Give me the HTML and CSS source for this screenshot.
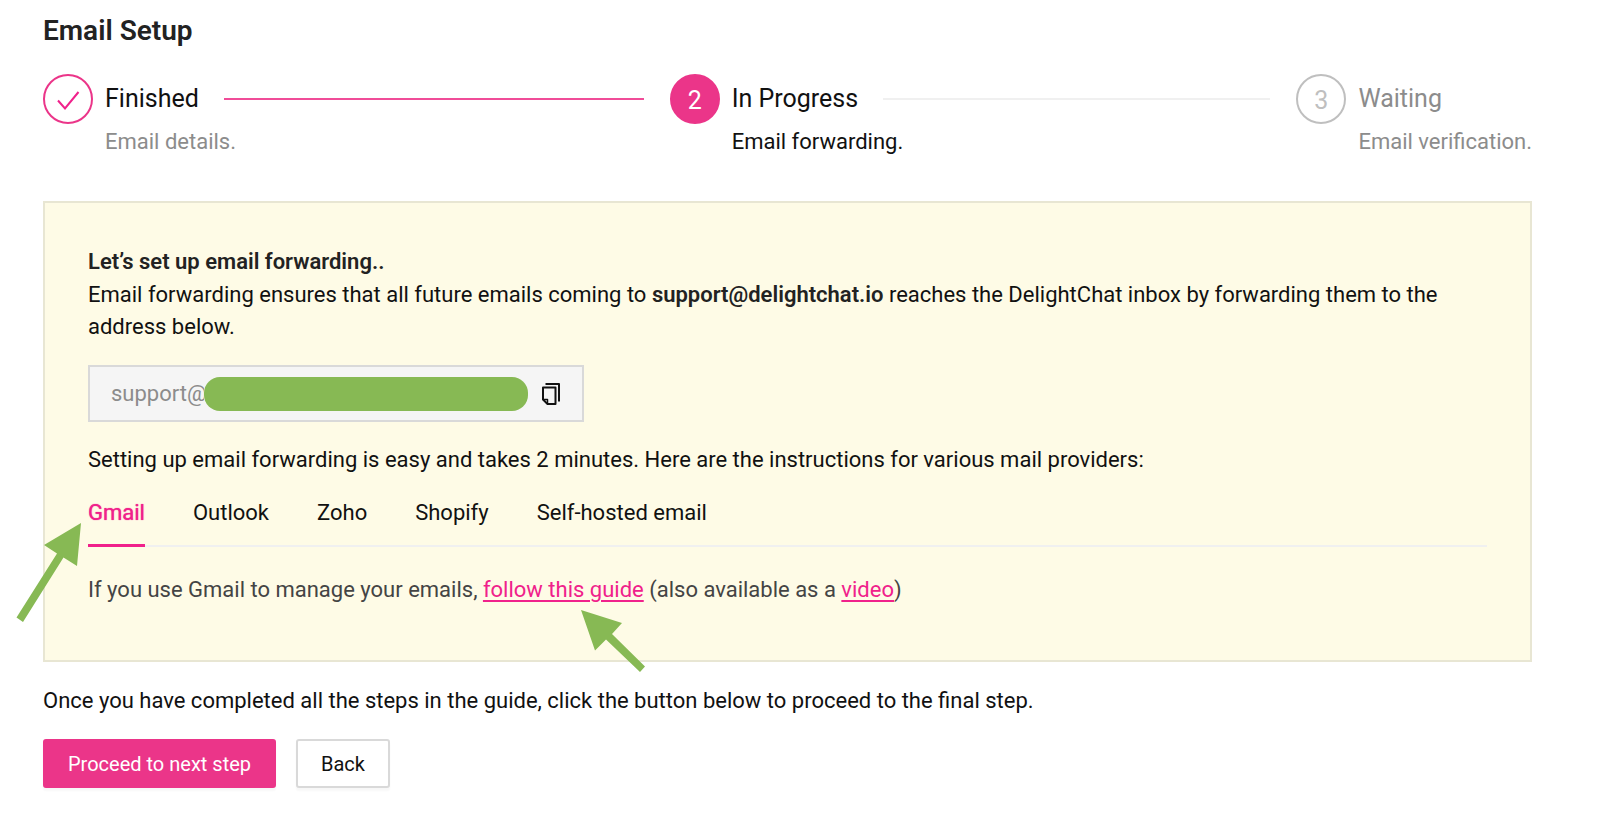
FILE: index.html
```html
<!DOCTYPE html>
<html lang="en">
<head>
<meta charset="utf-8">
<title>Email Setup</title>
<link rel="stylesheet" href="styles.css">
</head>
<body>
<main class="page">
  <h1 class="page-title">Email Setup</h1>

  <ol class="steps">
    <li class="step step-done">
      <span class="step-icon">
        <svg width="24" height="24" viewBox="0 0 24 24" fill="none" stroke="currentColor" stroke-width="2"><path d="M2 11.500 L9 19.500 L22.500 3"/></svg>
      </span>
      <div class="step-body">
        <div class="step-title">Finished</div>
        <div class="step-text">Email details.</div>
      </div>
    </li>
    <li class="step step-active">
      <span class="step-icon">2</span>
      <div class="step-body">
        <div class="step-title">In Progress</div>
        <div class="step-text">Email forwarding.</div>
      </div>
    </li>
    <li class="step step-wait">
      <span class="step-icon">3</span>
      <div class="step-body">
        <div class="step-title">Waiting</div>
        <div class="step-text">Email verification.</div>
      </div>
    </li>
  </ol>

  <section class="panel">
    <h2 class="panel-title">Let’s set up email forwarding..</h2>
    <p class="text">Email forwarding ensures that all future emails coming to <strong>support@delightchat.io</strong> reaches the DelightChat inbox by forwarding them to the address below.</p>

    <div class="address">
      <input class="address-input" type="text" value="support@" aria-label="Forwarding address" readonly>
      <span class="address-mask"></span>
      <button class="copy" type="button" aria-label="Copy address">
        <svg width="18" height="22" viewBox="0 0 18 22" fill="none" stroke="currentColor" stroke-width="2" stroke-linejoin="round"><path d="M3.500 1H17V18.500"/><path d="M1 4.500H13.500V21H5.500L1 16.500Z"/><path d="M1.500 16.500H5.500V20.500" stroke-width="1.500"/></svg>
      </button>
    </div>

    <p class="text">Setting up email forwarding is easy and takes 2 minutes. Here are the instructions for various mail providers:</p>

    <div class="tabs" role="tablist">
      <button class="tab tab-active" type="button" role="tab" aria-selected="true">Gmail
        <svg class="arrow arrow-tab" width="66" height="100" viewBox="0 0 66 100" fill="currentColor"><path d="M65 0 L61 43 L47.500 34.500 L7 99 L.5 94.500 L41 30.500 L28 22 Z"/></svg>
      </button>
      <button class="tab" type="button" role="tab" aria-selected="false">Outlook</button>
      <button class="tab" type="button" role="tab" aria-selected="false">Zoho</button>
      <button class="tab" type="button" role="tab" aria-selected="false">Shopify</button>
      <button class="tab" type="button" role="tab" aria-selected="false">Self-hosted email</button>
    </div>

    <p class="text guide">If you use Gmail to manage your emails, <a class="link" href="#guide">follow this guide<svg class="arrow arrow-link" width="64" height="62" viewBox="0 0 64 62" fill="currentColor"><path d="M0 0 L41 13 L31 24 L64 56.500 L59 62 L25 29.500 L14 40.500 Z"/></svg></a> (also available as a <a class="link" href="#video">video</a>)</p>
  </section>

  <p class="text after">Once you have completed all the steps in the guide, click the button below to proceed to the final step.</p>

  <div class="actions">
    <button class="btn btn-primary" type="button">Proceed to next step</button>
    <button class="btn" type="button">Back</button>
  </div>
</main>
</body>
</html>
```
FILE: styles.css
```css
:root {
  --pink: #eb3589;
  --pink-text: #f0218b;
  --green: #87b954;
}

* {
  box-sizing: border-box;
}

body {
  margin: 0;
  background: #fff;
  color: #111;
  font-family: Roboto, "Liberation Sans", sans-serif;
  font-size: 22px;
  line-height: 32px;
}

h1, h2, p, ol {
  margin: 0;
  padding: 0;
}

button, input {
  padding: 0;
  border: 0;
  background: none;
  color: inherit;
  font: inherit;
}

.page {
  padding: 11px 68px 32px 43px;
}

.page-title {
  color: #222;
  font-size: 28px;
  font-weight: 600;
  line-height: 40px;
}

.steps {
  display: flex;
  gap: 26px;
  margin-top: 23px;
  list-style: none;
}

.step {
  display: flex;
  flex: 1 1 0;
  gap: 12px;
}

.step:last-child {
  flex: none;
}

.step-icon {
  display: flex;
  flex: none;
  align-items: center;
  justify-content: center;
  width: 50px;
  height: 50px;
  padding-top: 4px;
  border: 2px solid var(--pink);
  border-radius: 50%;
  color: var(--pink-text);
  font-size: 25px;
}

.step-active .step-icon {
  background: var(--pink);
  color: #fff;
}

.step-wait .step-icon {
  border-color: #bfbfbf;
  color: #bfbfbf;
}

.step-body {
  flex: 1;
}

.step-title {
  display: flex;
  align-items: center;
  gap: 25px;
  font-size: 25px;
  line-height: 50px;
}

.step:not(:last-child) .step-title::after {
  content: "";
  flex: 1;
  height: 2px;
  background: #f0f0f0;
}

.step-done:not(:last-child) .step-title::after {
  background: #f04c98;
}

.step-text {
  padding-top: 2px;
}

.step-done .step-text,
.step-wait .step-body {
  color: #8c8c8c;
}

.panel {
  margin-top: 43px;
  padding: 43px;
  padding-bottom: 54px;
  border: 2px solid #e8e6d3;
  background: #fefbe6;
}

.panel-title,
.panel strong {
  color: #222;
  font-size: 22px;
  font-weight: 600;
}

.panel-title {
  padding-bottom: 1px;
}

.address {
  display: flex;
  align-items: center;
  width: 496px;
  max-width: 100%;
  height: 57px;
  margin: 22px 0;
  padding: 0 22px 0 21px;
  border: 2px solid #d9d9d9;
  background: #f5f5f5;
  color: #8c8c8c;
}

.address-input {
  width: 93px;
}

.address-mask {
  flex: 1;
  height: 34px;
  border-radius: 16px;
  background: var(--green);
}

.copy {
  display: flex;
  margin-left: 14px;
  color: #111;
}

.tabs {
  display: flex;
  gap: 48px;
  margin-top: 21px;
  box-shadow: inset 0 -2px #f0f0f0;
}

.tab {
  position: relative;
  padding-bottom: 15px;
  border-bottom: 3px solid transparent;
}

.tab-active {
  border-color: var(--pink-text);
  color: var(--pink-text);
  text-shadow: 0 0 1px var(--pink-text);
}

.guide {
  margin-top: 27px;
  color: #444;
}

.link {
  position: relative;
  color: var(--pink-text);
  text-decoration: underline;
  text-underline-offset: 3px;
  text-decoration-thickness: 2px;
}

.arrow {
  position: absolute;
  color: var(--green);
  pointer-events: none;
}

.arrow-tab {
  top: 26px;
  right: 63px;
}

.arrow-link {
  top: 100%;
  left: 98px;
  margin-top: 8px;
}

.after {
  margin-top: 23px;
}

.actions {
  display: flex;
  gap: 20px;
  margin-top: 22px;
}

.btn {
  height: 49px;
  padding: 0 23px;
  border: 2px solid #d9d9d9;
  border-radius: 3px;
  background: #fff;
  box-shadow: 0 3px 2px rgba(0, 0, 0, 0.03);
  font-size: 20px;
}

.btn-primary {
  border-color: var(--pink);
  background: var(--pink);
  color: #fff;
}
```
